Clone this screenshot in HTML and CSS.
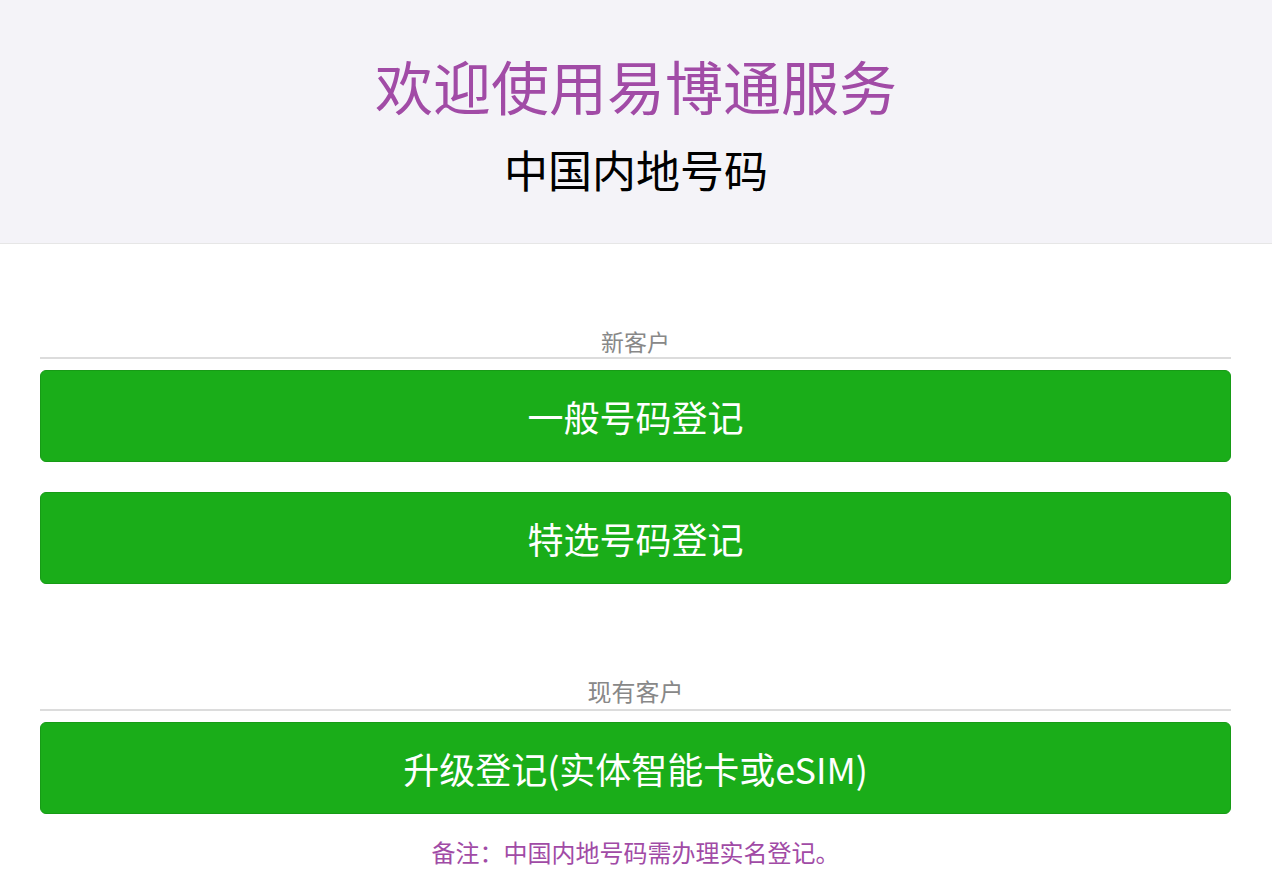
FILE: index.html
```html
<!DOCTYPE html>
<html lang="zh-CN">
<head>
<meta charset="utf-8">
<title>欢迎使用易博通服务</title>
<link rel="stylesheet" href="styles.css">
</head>
<body>
<header class="hero">
  <h1 class="hero-title">欢迎使用易博通服务</h1>
  <h2 class="hero-sub">中国内地号码</h2>
</header>
<main class="content">
  <section class="group group-new">
    <div class="group-label">新客户</div>
    <a class="btn" href="#">一般号码登记</a>
    <a class="btn btn-next" href="#">特选号码登记</a>
  </section>
  <section class="group group-existing">
    <div class="group-label">现有客户</div>
    <a class="btn" href="#">升级登记(实体智能卡或eSIM)</a>
  </section>
  <p class="note">备注：中国内地号码需办理实名登记。</p>
</main>
</body>
</html>
```
FILE: styles.css
```css
* { box-sizing: border-box; }
html, body { margin: 0; padding: 0; background: #ffffff; }
body {
  font-family: "Noto Sans CJK SC", "Noto Sans", "Liberation Sans", sans-serif;
  color: #000;
}
.hero {
  background: #f4f3f8;
  border-bottom: 1px solid #e6e6e6;
  padding: 50px 0 47px;
  text-align: center;
}
.hero-title {
  margin: 0;
  font-size: 58px;
  line-height: 70px;
  font-weight: 400;
  color: #a14ba6;
}
.hero-sub {
  margin: 22px 0 0;
  font-size: 44px;
  line-height: 54px;
  font-weight: 400;
  color: #000;
}
.content {
  padding: 0 41px 0 40px;
}
.group-new { margin-top: 83px; }
.group-existing { margin-top: 93px; }
.group-label {
  text-align: center;
  font-size: 23px;
  line-height: 28px;
  padding-bottom: 2px;
  color: #888888;
  border-bottom: 2px solid #dcdcdc;
}
.group-existing .group-label {
  font-size: 24px;
  padding-bottom: 4px;
}
.btn {
  display: flex;
  align-items: center;
  justify-content: center;
  height: 92px;
  margin-top: 11px;
  background: #1aad19;
  border: 1px solid #179b16;
  border-radius: 6px;
  color: #ffffff;
  font-size: 36px;
  text-decoration: none;
}
.btn-next { margin-top: 30px; }
.note {
  margin: 22px 0 0;
  text-align: center;
  font-size: 24px;
  line-height: 32px;
  color: #a14ba6;
}
```
